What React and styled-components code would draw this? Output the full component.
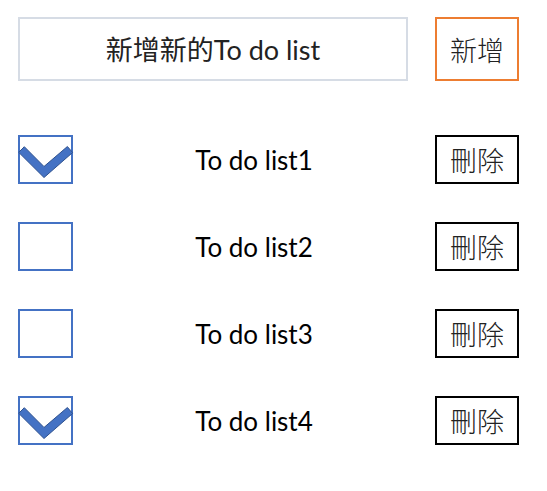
import React, { useState } from 'react'
import styled, { createGlobalStyle } from 'styled-components'

const GlobalStyle = createGlobalStyle`
  body {
    margin: 0;
    background: #fff;
    font-family: "Lato", "Noto Sans CJK TC", sans-serif;
  }
`

const Page = styled.div`
  width: 547px;
  box-sizing: border-box;
  padding: 17px 28px 0 18px;
`

const Header = styled.div`
  display: flex;
  align-items: center;
`

const NewInput = styled.input`
  width: 390px;
  height: 64px;
  box-sizing: border-box;
  border: 2px solid #d6dce5;
  outline: none;
  padding: 0;
  text-align: center;
  font-family: "Lato", "Noto Sans CJK TC", sans-serif;
  font-size: 27px;
  color: #111;
  &::placeholder {
    color: #222;
    opacity: 1;
  }
`

const Button = styled.button`
  margin-left: auto;
  width: 84px;
  height: ${p => p.$tall ? 64 : 49}px;
  box-sizing: border-box;
  border: 2px solid ${p => p.$color || '#000'};
  background: #fff;
  padding: 0;
  font-family: "Noto Sans CJK TC", sans-serif;
  font-weight: 300;
  font-size: 27px;
  color: #222;
`

const List = styled.div`
  margin-top: 54px;
  display: flex;
  flex-direction: column;
  gap: 38px;
`

const Row = styled.div`
  display: flex;
  align-items: center;
  height: 49px;
`

const Box = styled.div`
  position: relative;
  width: 55px;
  height: 49px;
  box-sizing: border-box;
  border: 2px solid #4472c4;
  flex-shrink: 0;
`

const Check = styled.svg`
  position: absolute;
  left: -2px;
  top: -2px;
  overflow: visible;
`

const Label = styled.div`
  flex: 1;
  text-align: center;
  font-size: 26px;
  color: #000;
`

const Checkbox = ({ checked }) => (
  <Box>
    {checked && (
      <Check width="55" height="49" viewBox="0 0 55 49">
        <polygon
          points="6.3,11.7 26,31.5 49.4,11.5 54.6,17.5 26,42.5 0.7,17.3"
          fill="#4472c4"
          stroke="#2f528f"
          strokeWidth="1"
          strokeLinejoin="miter"
        />
      </Check>
    )}
  </Box>
)

const items = [
  { id: 1, text: 'To do list1', done: true },
  { id: 2, text: 'To do list2', done: false },
  { id: 3, text: 'To do list3', done: false },
  { id: 4, text: 'To do list4', done: true },
]

export default function App() {
  const [todos] = useState(items)
  return (
    <Page>
      <GlobalStyle />
      <Header>
        <NewInput placeholder="新增新的To do list" />
        <Button $tall $color="#ed7d31">新增</Button>
      </Header>
      <List>
        {todos.map(t => (
          <Row key={t.id}>
            <Checkbox checked={t.done} />
            <Label>{t.text}</Label>
            <Button>刪除</Button>
          </Row>
        ))}
      </List>
    </Page>
  )
}
